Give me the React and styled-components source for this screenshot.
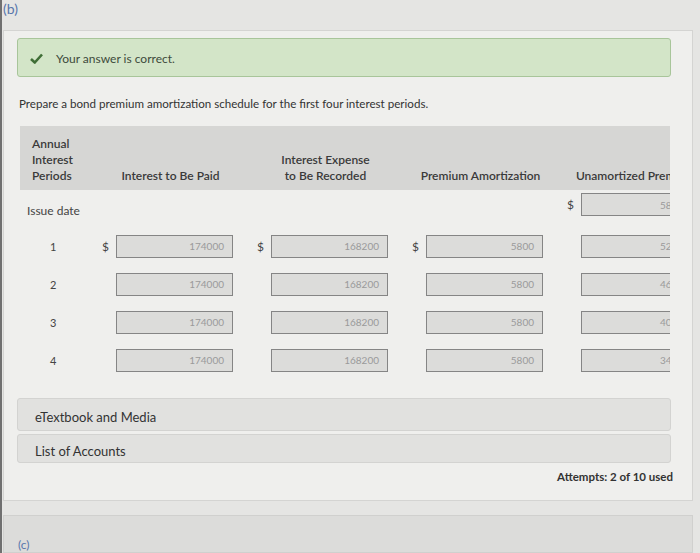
import React from "react";
import styled, { createGlobalStyle } from "styled-components";

const Global = createGlobalStyle`
  html, body { margin: 0; padding: 0; background: #e5e5e3; }
  body { font-family: Lato, "Open Sans", "Liberation Sans", sans-serif; }
  * { box-sizing: border-box; }
`;

const Page = styled.div`
  width: 700px;
  height: 553px;
  overflow: hidden;
  background: #e5e5e3;
  border-left: 2px solid #707070;
  display: flex;
  flex-direction: column;
`;

const PartLabel = styled.div`
  height: 30px;
  padding: 1px 0 0 1px;
  font-size: 14px;
  line-height: 16px;
  color: #5876ab;
`;

const Card = styled.div`
  margin: 0 7px 0 1px;
  background: #efefed;
  border: 1px solid #d4d4d2;
  padding: 7px 21px 16px 13px;
  display: flex;
  flex-direction: column;
`;

const Success = styled.div`
  height: 39px;
  background: #d3e5c8;
  border: 1px solid #a8c59a;
  border-radius: 3px;
  display: flex;
  align-items: center;
  gap: 13px;
  padding: 2px 0 0 12px;
  font-size: 12px;
  color: #3d4a3b;
`;

const Prompt = styled.p`
  margin: 20px 0 0 2px;
  font-size: 11.6px;
  line-height: 14px;
  color: #333;
`;

const Scroll = styled.div`
  margin: 15px 0 0 3px;
  width: 650px;
  overflow: hidden;
`;

const Grid = styled.div`
  display: grid;
  grid-template-columns: 80px repeat(4, 155px);
  width: 700px;
`;

const Head = styled.div`
  height: 64px;
  background: #d6d6d4;
  display: flex;
  align-items: flex-end;
  justify-content: ${(p) => (p.$left ? "flex-start" : "center")};
  padding: 0 ${(p) => (p.$left ? "0" : "14px")} 6px ${(p) => (p.$left ? "12px" : "0")};
  font-size: 12px;
  line-height: 16px;
  font-weight: 600;
  color: #3a3a3a;
  text-align: ${(p) => (p.$left ? "left" : "center")};
`;

const Label = styled.div`
  height: ${(p) => (p.$first ? "37px" : "38px")};
  display: flex;
  align-items: center;
  padding-left: ${(p) => (p.$text ? "7px" : "30px")};
  padding-top: ${(p) => (p.$first ? "4px" : "0")};
  font-size: ${(p) => (p.$text ? "12px" : "11px")};
  color: #444;
`;

const Cell = styled.div`
  height: ${(p) => (p.$first ? "37px" : "38px")};
  display: flex;
  align-items: center;
  padding-left: 2px;
  padding-bottom: ${(p) => (p.$first ? "8px" : "0")};
`;

const Dollar = styled.span`
  width: 14px;
  font-size: 12px;
  color: #444;
`;

const Box = styled.div`
  width: 117px;
  height: 23px;
  background: #dcdcda;
  border: 1px solid #858585;
  display: flex;
  align-items: center;
  justify-content: flex-end;
  padding-right: 8px;
  font-size: 10px;
  color: #9a9a9a;
`;

const Bar = styled.div`
  height: ${(p) => p.$h}px;
  margin-top: ${(p) => p.$mt}px;
  background: #e1e1df;
  border: 1px solid #d3d3d1;
  border-radius: 3px;
  display: flex;
  align-items: center;
  padding: 4px 0 0 17px;
  font-size: 13px;
  color: #333;
`;

const Attempts = styled.div`
  margin-top: 7px;
  text-align: right;
  font-size: 11.5px;
  line-height: 14px;
  font-weight: 700;
  color: #333;
  margin-right: -2px;
`;

const NextPart = styled.div`
  margin: 14px 7px 0 1px;
  flex: 1;
  background: #dcdcda;
  border: 1px solid #d0d0ce;
  padding: 21px 0 0 14px;
  font-size: 12px;
  color: #5876ab;
`;

const rows = [
  { label: "Issue date", vals: [null, null, null, "58000"], dollars: [false, false, false, true] },
  { label: "1", vals: ["174000", "168200", "5800", "52200"], dollars: [true, true, true, false] },
  { label: "2", vals: ["174000", "168200", "5800", "46400"], dollars: [false, false, false, false] },
  { label: "3", vals: ["174000", "168200", "5800", "40600"], dollars: [false, false, false, false] },
  { label: "4", vals: ["174000", "168200", "5800", "34800"], dollars: [false, false, false, false] },
];

export default function App() {
  return (
    <>
      <Global />
      <Page>
        <PartLabel>(b)</PartLabel>
        <Card>
          <Success>
            <svg width="13" height="11" viewBox="0 0 13 11">
              <path d="M1 6 L4.8 9.5 L12 1.5" fill="none" stroke="#3f6e36" strokeWidth="2.6" strokeLinejoin="round" />
            </svg>
            Your answer is correct.
          </Success>
          <Prompt>Prepare a bond premium amortization schedule for the first four interest periods.</Prompt>
          <Scroll>
            <Grid>
              <Head $left>Annual<br />Interest<br />Periods</Head>
              <Head>Interest to Be Paid</Head>
              <Head>Interest Expense<br />to Be Recorded</Head>
              <Head>Premium Amortization</Head>
              <Head>Unamortized Premium</Head>
              {rows.map((r, i) => (
                <React.Fragment key={r.label}>
                  <Label $first={i === 0} $text={i === 0}>{r.label}</Label>
                  {r.vals.map((v, j) => (
                    <Cell key={j} $first={i === 0}>
                      <Dollar>{r.dollars[j] ? "$" : ""}</Dollar>
                      {v !== null && <Box>{v}</Box>}
                    </Cell>
                  ))}
                </React.Fragment>
              ))}
            </Grid>
          </Scroll>
          <Bar $h={33} $mt={19}>eTextbook and Media</Bar>
          <Bar $h={29} $mt={3}>List of Accounts</Bar>
          <Attempts>Attempts: 2 of 10 used</Attempts>
        </Card>
        <NextPart>(c)</NextPart>
      </Page>
    </>
  );
}
